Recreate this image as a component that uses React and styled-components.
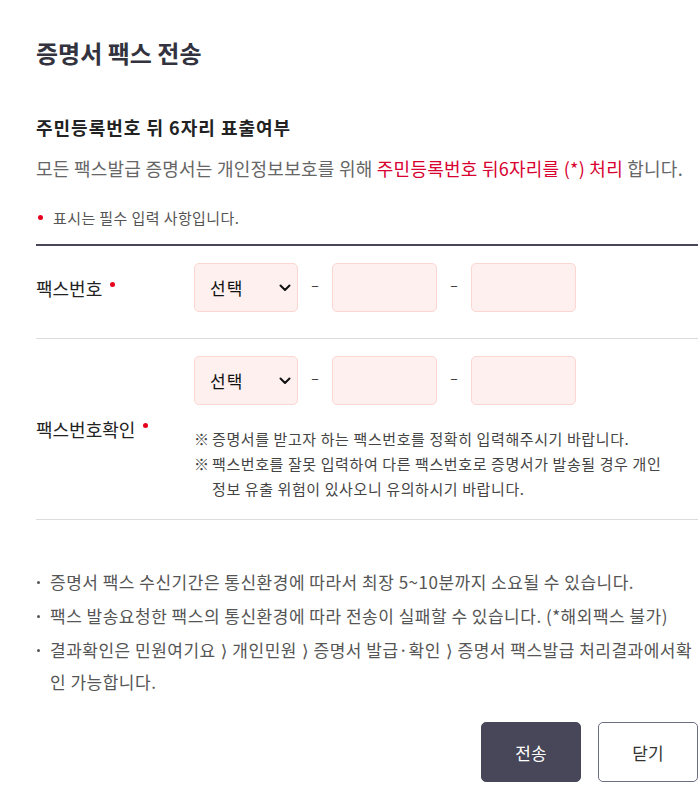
import React from "react";
import styled, { createGlobalStyle } from "styled-components";

const Global = createGlobalStyle`
  html, body { margin: 0; padding: 0; background: #fff; }
  body { font-family: "Noto Sans CJK KR", "Noto Sans", sans-serif; color: #222; }
  * { box-sizing: border-box; }
`;

const Page = styled.div`
  width: 699px;
  padding: 0 1px 0 36px;
`;

const Title = styled.h1`
  margin: 0;
  padding-top: 36px;
  font-size: 24px;
  line-height: 34px;
  font-weight: 700;
  color: #333340;
`;

const SubTitle = styled.h2`
  margin: 0;
  margin-top: 44px;
  font-size: 18px;
  line-height: 26px;
  font-weight: 700;
  color: #222;
  letter-spacing: 1px;
`;

const Desc = styled.p`
  margin: 0;
  margin-top: 15px;
  font-size: 18px;
  line-height: 26px;
  color: #666;
  letter-spacing: 0.25px;
`;

const Red = styled.span`
  color: #d8002f;
`;

const Required = styled.p`
  margin: 0;
  margin-top: 27px;
  font-size: 15px;
  line-height: 20px;
  color: #555;
  display: flex;
  align-items: center;
  letter-spacing: 0.4px;
`;

const Dot = styled.span`
  display: inline-block;
  width: 5px;
  height: 5px;
  border-radius: 50%;
  background: #e8001c;
  margin: ${(p) => (p.$after ? "0 0 0 8px" : "0 10px 0 2px")};
  position: relative;
  top: ${(p) => (p.$after ? "-3px" : "-1px")};
`;

const Form = styled.div`
  margin-top: 16px;
  border-top: 2px solid #474759;
`;

const Row = styled.div`
  display: flex;
  align-items: center;
  border-bottom: 1px solid #dcdcdc;
  padding: ${(p) => p.$pad};
`;

const Label = styled.div`
  width: 158px;
  flex-shrink: 0;
  font-size: 18px;
  color: #222;
  display: flex;
  align-items: center;
`;

const Field = styled.div`
  display: flex;
  flex-direction: column;
`;

const Inputs = styled.div`
  display: flex;
  align-items: center;
`;

const SelectBox = styled.div`
  width: 104px;
  height: 49px;
  border: 1px solid #fcd6d1;
  border-radius: 5px;
  background: #fff0f0;
  display: flex;
  align-items: center;
  justify-content: space-between;
  padding: 0 6px 0 15px;
  font-size: 17px;
  letter-spacing: 1px;
  color: #111;
`;

const Input = styled.div`
  width: 105px;
  height: 49px;
  border: 1px solid #fcd6d1;
  border-radius: 5px;
  background: #fff0f0;
`;

const Dash = styled.span`
  width: 34px;
  text-align: center;
  font-size: 14px;
  color: #333;
  position: relative;
  top: -4px;
`;

const Notes = styled.ul`
  list-style: none;
  margin: 21px 0 0;
  padding: 0;
  max-width: 474px;
  font-size: 15px;
  line-height: 25px;
  color: #444;
  letter-spacing: 0.6px;
  word-break: keep-all;
`;

const Note = styled.li`
  position: relative;
  padding-left: 18px;
  &::before {
    content: "※";
    position: absolute;
    left: 0;
    letter-spacing: 0;
  }
`;

const Bullets = styled.ul`
  list-style: none;
  margin: 46px 0 0;
  padding: 0;
  font-size: 17px;
  line-height: 32px;
  color: #555;
  letter-spacing: 0.5px;
  word-break: break-all;
`;

const Bullet = styled.li`
  position: relative;
  padding-left: 14px;
  margin-bottom: 2px;
  &::before {
    content: "";
    position: absolute;
    left: 1px;
    top: 15px;
    width: 3px;
    height: 3px;
    border-radius: 50%;
    background: #555;
  }
`;

const Sep = styled.span`
  font-family: "DejaVu Sans", sans-serif;
  font-size: 17px;
  line-height: 1;
  letter-spacing: 0;
  margin: 0 5px;
`;

const Buttons = styled.div`
  display: flex;
  justify-content: flex-end;
  gap: 17px;
  margin-top: 24px;
`;

const Button = styled.button`
  width: 100px;
  height: 60px;
  border-radius: 5px;
  font-family: inherit;
  font-size: 17px;
  cursor: pointer;
  border: 1px solid ${(p) => (p.$primary ? "#474759" : "#6b7080")};
  background: ${(p) => (p.$primary ? "#474759" : "#fff")};
  color: ${(p) => (p.$primary ? "#fff" : "#333")};
`;

const Chevron = () => (
  <svg width="12" height="8" viewBox="0 0 12 8" fill="none">
    <path d="M1.5 1.5 L6 6 L10.5 1.5" stroke="#111" strokeWidth="2" strokeLinecap="round" strokeLinejoin="round" />
  </svg>
);

const PhoneInputs = () => (
  <Inputs>
    <SelectBox>
      <span>선택</span>
      <Chevron />
    </SelectBox>
    <Dash>–</Dash>
    <Input />
    <Dash>–</Dash>
    <Input />
  </Inputs>
);

export default function App() {
  return (
    <Page>
      <Global />
      <Title>증명서 팩스 전송</Title>
      <SubTitle>주민등록번호 뒤 6자리 표출여부</SubTitle>
      <Desc>
        모든 팩스발급 증명서는 개인정보보호를 위해 <Red>주민등록번호 뒤6자리를 (*) 처리</Red> 합니다.
      </Desc>
      <Required>
        <Dot />
        표시는 필수 입력 사항입니다.
      </Required>
      <Form>
        <Row $pad="17px 0 26px">
          <Label>
            팩스번호
            <Dot $after />
          </Label>
          <Field>
            <PhoneInputs />
          </Field>
        </Row>
        <Row $pad="17px 0 18px">
          <Label>
            팩스번호확인
            <Dot $after />
          </Label>
          <Field>
            <PhoneInputs />
            <Notes>
              <Note>증명서를 받고자 하는 팩스번호를 정확히 입력해주시기 바랍니다.</Note>
              <Note>
                팩스번호를 잘못 입력하여 다른 팩스번호로 증명서가 발송될 경우 개인 정보 유출 위험이 있사오니 유의하시기 바랍니다.
              </Note>
            </Notes>
          </Field>
        </Row>
      </Form>
      <Bullets>
        <Bullet>증명서 팩스 수신기간은 통신환경에 따라서 최장 5~10분까지 소요될 수 있습니다.</Bullet>
        <Bullet>팩스 발송요청한 팩스의 통신환경에 따라 전송이 실패할 수 있습니다. (*해외팩스 불가)</Bullet>
        <Bullet>
          결과확인은 민원여기요<Sep>⟩</Sep>개인민원<Sep>⟩</Sep>증명서 발급·확인<Sep>⟩</Sep>증명서 팩스발급 처리결과에서확인 가능합니다.
        </Bullet>
      </Bullets>
      <Buttons>
        <Button $primary>전송</Button>
        <Button>닫기</Button>
      </Buttons>
    </Page>
  );
}
